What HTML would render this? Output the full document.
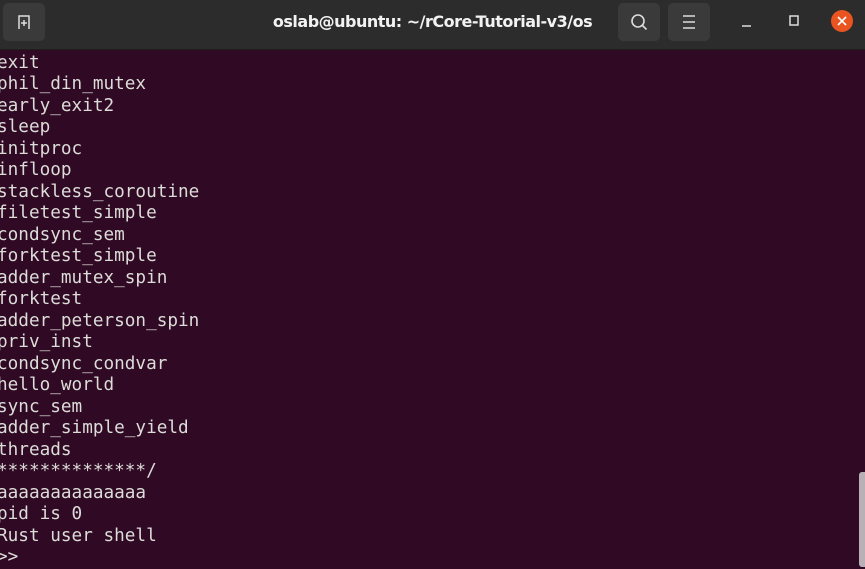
<!DOCTYPE html>
<html><head><style>
html,body{margin:0;padding:0;width:865px;height:567px;overflow:hidden;background:#300a24;}
#bar{position:absolute;left:0;top:0;width:865px;height:49px;background:#2c2c2c;border-bottom:1px solid #1e1e1e;}
.btn{position:absolute;top:3px;width:42px;height:38px;background:#3a3a3a;border-radius:5px;}
#title{position:absolute;top:0;left:0;width:865px;text-align:center;color:#f2f2f2;font:bold 16px "DejaVu Sans","Liberation Sans",sans-serif;line-height:44px;letter-spacing:-0.5px;}
#term{position:absolute;left:-3px;top:53px;font-family:"DejaVu Sans Mono","Liberation Mono",monospace;font-size:17.7px;line-height:21.48px;color:#dcdcd8;white-space:pre;}
#sb{position:absolute;right:0;top:472px;width:6px;height:95px;background:#b8b0b5;border-radius:3px 0 0 3px;}
</style></head><body>
<div id="bar">
<div id="title">oslab@ubuntu: ~/rCore-Tutorial-v3/os</div>
<div class="btn" style="left:3px">
<svg width="42" height="38" viewBox="0 0 42 38"><path d="M16 26V13h10v13M21 17v6M18 20h6" stroke="#ddd" stroke-width="1.5" fill="none"/></svg></div>
<div class="btn" style="left:618px">
<svg width="42" height="38" viewBox="0 0 42 38"><circle cx="20" cy="18" r="6" stroke="#ddd" stroke-width="1.6" fill="none"/><path d="M24.5 22.5l4 4" stroke="#ddd" stroke-width="1.6"/></svg></div>
<div class="btn" style="left:668px">
<svg width="42" height="38" viewBox="0 0 42 38"><path d="M15 13h12M15 19h12M15 25h12" stroke="#ddd" stroke-width="1.5"/></svg></div>
<svg style="position:absolute;left:730px;top:0" width="135" height="44" viewBox="0 0 135 44">
<path d="M12 26h9" stroke="#ddd" stroke-width="1.5"/>
<rect x="60" y="16" width="8" height="9" stroke="#ddd" stroke-width="1.5" fill="none"/>
<circle cx="112" cy="21" r="11" fill="#e95420"/>
<path d="M108 17l8 8M116 17l-8 8" stroke="#fff" stroke-width="1.6"/>
</svg>
</div>
<div id="term">exit
phil_din_mutex
early_exit2
sleep
initproc
infloop
stackless_coroutine
filetest_simple
condsync_sem
forktest_simple
adder_mutex_spin
forktest
adder_peterson_spin
priv_inst
condsync_condvar
hello_world
sync_sem
adder_simple_yield
threads
**************/
aaaaaaaaaaaaaa
pid is 0
Rust user shell
&gt;&gt;</div>
<div id="sb"></div>
</body></html>
